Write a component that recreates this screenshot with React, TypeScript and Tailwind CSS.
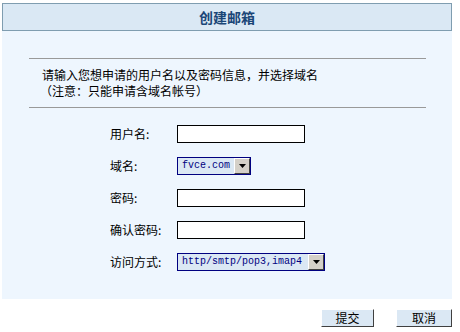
import { ReactNode } from 'react'

const cjk = "font-['SimSun','Noto_Sans_CJK_SC',sans-serif]"

function Row({ label, children }: { label: string; children: ReactNode }) {
  return (
    <div className="flex items-center h-[32px]">
      <span className="w-[67px] text-[12px] text-black">{label}</span>
      {children}
    </div>
  )
}

function TextBox({ type = 'text' }: { type?: string }) {
  return <input type={type} className="w-[128px] h-[18px] border border-black bg-white outline-none" />
}

function Picker({ value, width }: { value: string; width: string }) {
  return (
    <div className={`flex items-center h-[18px] border border-[#000080] bg-[#dbe8f4] ${width}`}>
      <span className="flex-1 pl-[4px] text-[10px] leading-none text-[#000080] font-['Liberation_Mono','Noto_Sans_CJK_SC',monospace] whitespace-nowrap">
        {value}
      </span>
      <span className="w-[16px] h-[16px] bg-[#d4d0c8] border-t border-l border-white border-r border-b border-r-[#404040] border-b-[#404040] flex items-center justify-center">
        <svg width="7" height="4" viewBox="0 0 7 4">
          <path d="M0 0h7L3.5 4z" fill="#000" />
        </svg>
      </span>
    </div>
  )
}

export default function App() {
  return (
    <div className={`w-[460px] h-[332px] bg-white pl-[2px] pt-[3px] ${cjk}`}>
      <div className="w-[450px]">
        <div className="h-[28px] border border-[#7f9db0] bg-[#dae8f4] flex items-center justify-center">
          <span className="text-[14px] font-bold text-[#1a4677]">创建邮箱</span>
        </div>
        <div className="h-[268px] bg-[#eef6fe] pt-[27px]">
          <div className="ml-[27px] w-[397px] h-px bg-[#999999]" />
          <div className="ml-[38px] mt-[8px] text-[12px] leading-[16px] text-black">
            <div className="pl-[2px]">请输入您想申请的用户名以及密码信息，并选择域名</div>
            <div>（注意：只能申请含域名帐号）</div>
          </div>
          <div className="ml-[27px] mt-[8px] w-[397px] h-px bg-[#999999]" />
          <div className="ml-[108px] mt-[10px] flex flex-col">
            <Row label="用户名:">
              <TextBox />
            </Row>
            <Row label="域名:">
              <Picker value="fvce.com" width="w-[74px]" />
            </Row>
            <Row label="密码:">
              <TextBox type="password" />
            </Row>
            <Row label="确认密码:">
              <TextBox type="password" />
            </Row>
            <Row label="访问方式:">
              <Picker value="http/smtp/pop3,imap4" width="w-[148px]" />
            </Row>
          </div>
        </div>
        <div className="flex justify-end gap-[22px] mt-[10px]">
          <button className="w-[53px] h-[18px] bg-[#dbe8f4] border border-t-white border-l-white border-r-[#404040] border-b-[#404040] text-[12px] leading-none text-black">
            提交
          </button>
          <button className="w-[56px] h-[18px] bg-[#dbe8f4] border border-t-white border-l-white border-r-[#404040] border-b-[#404040] text-[12px] leading-none text-black">
            取消
          </button>
        </div>
      </div>
    </div>
  )
}
